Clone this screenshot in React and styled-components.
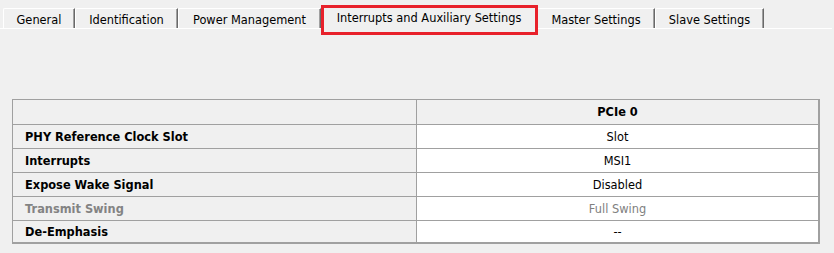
import React from 'react'
import styled, { createGlobalStyle } from 'styled-components'

const Global = createGlobalStyle`
  html, body {
    margin: 0;
    padding: 0;
    background: #f0f0f0;
  }
  body {
    font-family: "DejaVu Sans", Tahoma, sans-serif;
    font-size: 11.4px;
    color: #000;
  }
`

const Page = styled.div`
  width: 834px;
  height: 253px;
  overflow: hidden;
`

const TabStrip = styled.div`
  display: flex;
  align-items: flex-end;
  margin: 8px 2px 0 0;
  padding-left: 3px;
  height: 20px;
  border-bottom: 1px solid #ffffff;
`

const Tab = styled.div`
  position: relative;
  box-sizing: border-box;
  width: ${p => p.w}px;
  height: ${p => (p.active ? 23 : 20)}px;
  margin-bottom: ${p => (p.active ? -1 : 0)}px;
  display: flex;
  align-items: center;
  justify-content: center;
  padding-top: 2px;
  padding-bottom: ${p => (p.active ? 2 : 0)}px;
  background: #f0f0f0;
  border-top: 1px solid #ffffff;
  border-left: 1px solid #ffffff;
  border-right: 1px solid #696969;
  box-shadow: inset -1px 0 0 #a0a0a0;
  border-top-left-radius: 2px;
  white-space: nowrap;
  z-index: ${p => (p.active ? 2 : 1)};

  ${p => p.active && `
    &::after {
      content: '';
      position: absolute;
      left: -1px;
      top: -2px;
      width: 217px;
      height: 30px;
      box-sizing: border-box;
      border: 3px solid #e8212b;
      pointer-events: none;
    }
  `}
`

const Grid = styled.div`
  box-sizing: border-box;
  display: grid;
  grid-template-columns: 404px 1fr;
  width: 808px;
  margin: 70px 0 0 12px;
  border-top: 1px solid #a0a0a0;
  border-left: 1px solid #a0a0a0;
  border-right: 2px solid #a0a0a0;
  border-bottom: 2px solid #a0a0a0;
`

const Cell = styled.div`
  box-sizing: border-box;
  height: ${p => p.h}px;
  display: flex;
  align-items: center;
  border-bottom: ${p => (p.last ? 'none' : '1px solid #a0a0a0')};
`

const LabelCell = styled(Cell)`
  background: #f0f0f0;
  border-right: 1px solid #a0a0a0;
  padding-left: 12px;
  font-weight: bold;
  color: ${p => (p.disabled ? '#838383' : '#000')};
`

const ValueCell = styled(Cell)`
  justify-content: center;
  background: ${p => (p.head ? '#f0f0f0' : '#ffffff')};
  font-weight: ${p => (p.head ? 'bold' : 'normal')};
  color: ${p => (p.disabled ? '#808080' : '#000')};
`

const tabs = [
  { label: 'General', w: 72 },
  { label: 'Identification', w: 103 },
  { label: 'Power Management', w: 143 },
  { label: 'Interrupts and Auxiliary Settings', w: 216, active: true },
  { label: 'Master Settings', w: 118 },
  { label: 'Slave Settings', w: 109 },
]

const rows = [
  { label: 'PHY Reference Clock Slot', value: 'Slot' },
  { label: 'Interrupts', value: 'MSI1' },
  { label: 'Expose Wake Signal', value: 'Disabled' },
  { label: 'Transmit Swing', value: 'Full Swing', disabled: true },
  { label: 'De-Emphasis', value: '--' },
]

const App = () => {
  return (
    <Page>
      <Global />
      <TabStrip>
        {tabs.map(t => (
          <Tab key={t.label} w={t.w} active={t.active}>{t.label}</Tab>
        ))}
      </TabStrip>

      <Grid>
        <LabelCell h={25} />
        <ValueCell h={25} head>PCIe 0</ValueCell>
        {rows.map((r, i) => {
          const last = i === rows.length - 1
          const h = last ? 21 : 24
          return (
            <React.Fragment key={r.label}>
              <LabelCell h={h} last={last} disabled={r.disabled}>{r.label}</LabelCell>
              <ValueCell h={h} last={last} disabled={r.disabled}>{r.value}</ValueCell>
            </React.Fragment>
          )
        })}
      </Grid>
    </Page>
  )
}

export default App
